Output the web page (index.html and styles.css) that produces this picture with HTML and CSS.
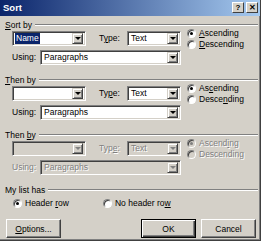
FILE: index.html
```html
<!DOCTYPE html>
<html>
<head>
<meta charset="utf-8">
<link rel="stylesheet" href="styles.css">
</head>
<body>
<div class="dlg">
  <div class="title">
    <span class="ttl">Sort</span>
    <div class="tbtns"><span class="tb">?</span><span class="tb x">✕</span></div>
  </div>
  <div class="body">
    <section class="grp">
      <div class="gh"><span><u>S</u>ort by</span><i class="line"></i></div>
      <div class="row1">
        <div class="combo w1"><span class="val sel">Name</span><b class="arrow"></b></div>
        <span class="lbl type">T<u>y</u>pe:</span>
        <div class="combo w2"><span class="val">Text</span><b class="arrow"></b></div>
        <div class="radios">
          <div class="radio"><span class="rb on"></span><span><u>A</u>scending</span></div>
          <div class="radio"><span class="rb"></span><span><u>D</u>escending</span></div>
        </div>
      </div>
      <div class="row2">
        <span class="lbl using">Using:</span>
        <div class="combo w3"><span class="val">Paragraphs</span><b class="arrow"></b></div>
      </div>
    </section>

    <section class="grp">
      <div class="gh"><span><u>T</u>hen by</span><i class="line"></i></div>
      <div class="row1">
        <div class="combo w1"><span class="val"></span><b class="arrow"></b></div>
        <span class="lbl type">Ty<u>p</u>e:</span>
        <div class="combo w2"><span class="val">Text</span><b class="arrow"></b></div>
        <div class="radios">
          <div class="radio"><span class="rb on"></span><span>As<u>c</u>ending</span></div>
          <div class="radio"><span class="rb"></span><span>Desce<u>n</u>ding</span></div>
        </div>
      </div>
      <div class="row2">
        <span class="lbl using">Using:</span>
        <div class="combo w3"><span class="val">Paragraphs</span><b class="arrow"></b></div>
      </div>
    </section>

    <section class="grp">
      <div class="gh"><span>Then <u>b</u>y</span><i class="line"></i></div>
      <div class="row1 dis">
        <div class="combo w1 off"><span class="val"></span><b class="arrow"></b></div>
        <span class="lbl type">Typ<u>e</u>:</span>
        <div class="combo w2 off"><span class="val">Text</span><b class="arrow"></b></div>
        <div class="radios">
          <div class="radio"><span class="rb on"></span><span>Ascend<u>i</u>ng</span></div>
          <div class="radio"><span class="rb"></span><span>Descendin<u>g</u></span></div>
        </div>
      </div>
      <div class="row2 dis">
        <span class="lbl using">Using:</span>
        <div class="combo w3 off"><span class="val">Paragraphs</span><b class="arrow"></b></div>
      </div>
    </section>

    <section class="grp last">
      <div class="gh"><span>My list has</span><i class="line"></i></div>
      <div class="hdr">
        <div class="radio"><span class="rb on"></span><span>Header <u>r</u>ow</span></div>
        <div class="radio nohdr"><span class="rb"></span><span>No header ro<u>w</u></span></div>
      </div>
    </section>

    <div class="btns">
      <span class="btn opt"><u>O</u>ptions...</span>
      <span class="btn def ok">OK</span>
      <span class="btn">Cancel</span>
    </div>
  </div>
</div>
</body>
</html>
```

FILE: styles.css
```css
* { box-sizing: border-box; margin: 0; padding: 0; }
html, body { width: 261px; height: 241px; overflow: hidden; }
body {
  font-family: "Liberation Sans", Arial, sans-serif;
  font-size: 8.5px;
  color: #000;
  background: #d4d0c8;
}
u { text-decoration: underline; }
i, b { font-style: normal; font-weight: normal; }

.dlg {
  width: 261px;
  height: 241px;
  background: #d4d0c8;
  border-right: 1px solid #404040;
  border-bottom: 1px solid #404040;
  box-shadow: inset -1px -1px 0 #808080;
  display: flex;
  flex-direction: column;
}

.title {
  height: 16px;
  background: linear-gradient(to right, #0a246a, #a6caf0);
  display: flex;
  align-items: flex-start;
  justify-content: space-between;
  padding: 2px 2px 0 3px;
}
.ttl { color: #fff; font-weight: bold; font-size: 9.5px; line-height: 11px; }
.tbtns { display: flex; gap: 2px; }
.tb {
  width: 12px; height: 11px;
  background: #d4d0c8;
  border: 1px solid;
  border-color: #fff #404040 #404040 #fff;
  font-weight: bold;
  font-size: 8px;
  line-height: 9px;
  text-align: center;
}
.tb.x { font-size: 8px; }

.body { padding: 4px 2px 0 5px; flex: 1; display: flex; flex-direction: column; }

.grp { margin-bottom: 10px; }
.grp.last { margin-bottom: 0; }
.gh { display: flex; align-items: center; height: 10px; line-height: 10px; }
.gh .line {
  flex: 1;
  height: 2px;
  border-top: 1px solid #808080;
  border-bottom: 1px solid #fff;
  margin-left: 3px;
}

.row1 { display: flex; align-items: flex-start; height: 15px; margin: 1px 0 0 7px; }
.row2 { display: flex; align-items: center; height: 15px; margin: 4px 0 0 7px; }

.lbl { line-height: 15px; }
.type { margin-left: 13px; width: 28px; }
.using { width: 28px; }

.combo {
  height: 15px;
  background: #fff;
  border: 1px solid;
  border-color: #808080 #fff #fff #808080;
  box-shadow: inset 1px 1px 0 #404040, inset -1px -1px 0 #d4d0c8;
  display: flex;
  align-items: center;
  padding: 2px;
}
.w1 { width: 74px; }
.w2 { width: 54px; }
.w3 { width: 141px; }
.combo.off { background: #d4d0c8; }

.val { line-height: 11px; padding-left: 1px; white-space: nowrap; }
.val.sel { background: #0a246a; color: #fff; padding: 0 1px; }

.arrow {
  margin-left: auto;
  flex: none;
  width: 11px;
  height: 11px;
  background: #d4d0c8;
  border: 1px solid;
  border-color: #d4d0c8 #404040 #404040 #d4d0c8;
  box-shadow: inset 1px 1px 0 #fff, inset -1px -1px 0 #808080;
  position: relative;
}
.arrow::after {
  content: "";
  position: absolute;
  left: 2px;
  top: 3px;
  border-left: 3px solid transparent;
  border-right: 3px solid transparent;
  border-top: 3px solid #000;
}
.dis .arrow::after { border-top-color: #808080; }

.radios { margin: -3px 0 0 6px; display: flex; flex-direction: column; }
.radio { display: flex; align-items: center; height: 11px; line-height: 11px; white-space: nowrap; }
.rb {
  width: 9px; height: 9px;
  border-radius: 50%;
  background: #fff;
  border: 1px solid;
  border-color: #808080 #fff #fff #808080;
  box-shadow: inset 1px 1px 0 #404040;
  margin-right: 3px;
  display: flex;
  align-items: center;
  justify-content: center;
  flex: none;
}
.rb.on::after { content: ""; width: 3px; height: 3px; border-radius: 50%; background: #000; }

.dis { color: #808080; }
.dis .lbl, .dis .val, .dis .radio span:last-child { text-shadow: 1px 1px 0 #fff; }
.dis .rb { background: #d4d0c8; }
.dis .rb.on::after { background: #808080; }

.hdr { display: flex; margin: 3px 0 0 8px; }
.nohdr { margin-left: 34px; }

.btns { display: flex; margin: 10px 2px 0 1px; gap: 5px; }
.btn {
  width: 55px; height: 19px;
  background: #d4d0c8;
  border: 1px solid;
  border-color: #fff #404040 #404040 #fff;
  box-shadow: inset -1px -1px 0 #808080;
  display: flex; align-items: center; justify-content: center;
}
.btn.opt { margin-right: auto; }
.btn.def { border-color: #000; box-shadow: inset 1px 1px 0 #fff, inset -1px -1px 0 #404040, inset -2px -2px 0 #808080; }
```
